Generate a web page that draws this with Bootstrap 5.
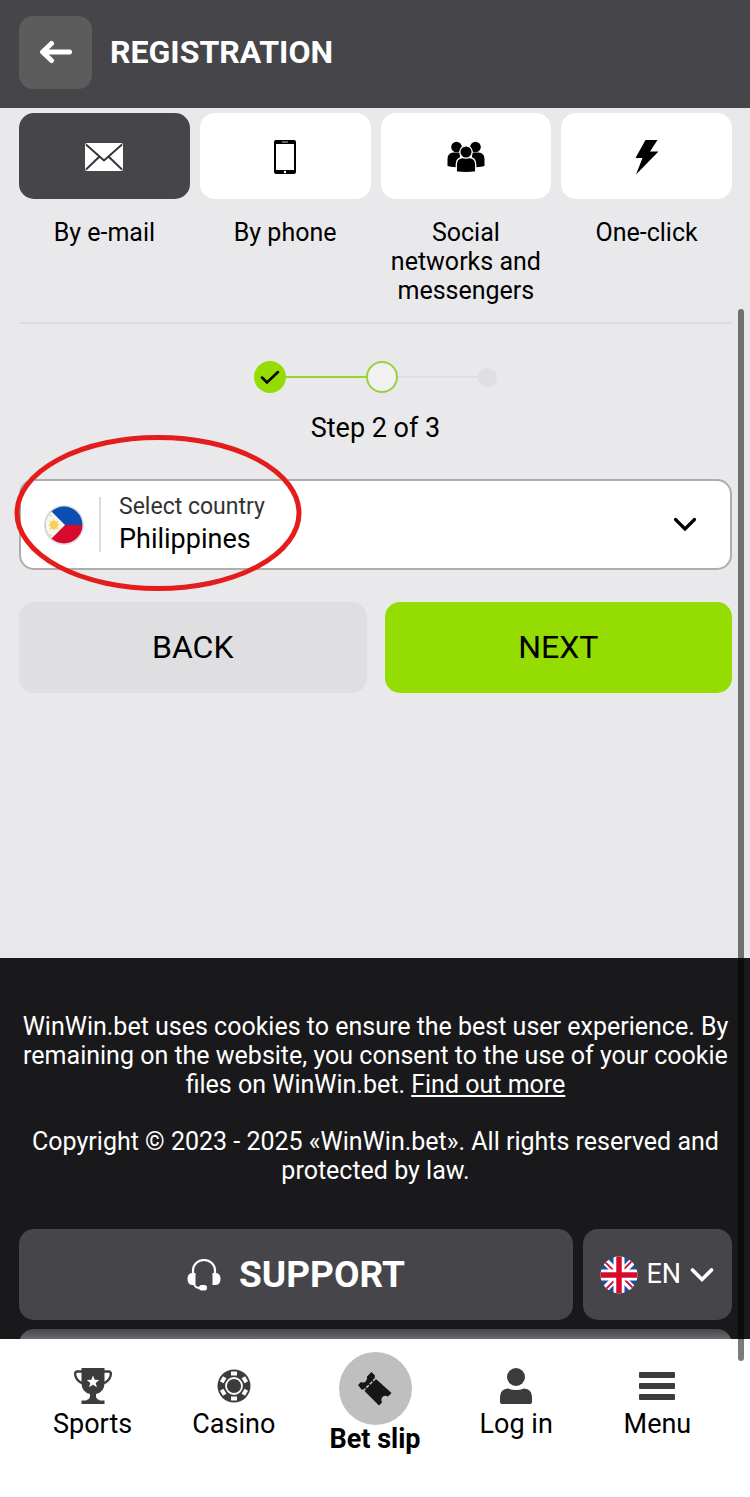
<!DOCTYPE html>
<html lang="en">
<head>
<meta charset="utf-8">
<meta name="viewport" content="width=device-width, initial-scale=1">
<title>Registration</title>
<link href="https://cdn.jsdelivr.net/npm/bootstrap@5.3.0/dist/css/bootstrap.min.css" rel="stylesheet">
<style>
  body { font-family: Roboto, "Liberation Sans", sans-serif; color: #000; background: #e9e9eb; line-height: 29px; }
  svg { display: block; flex: none; }
  .gutter { padding-left: 19px; padding-right: 18px; }
  .top-bar { height: 108px; background: #464549; gap: 18px; }
  .top-bar h1 { font-size: 32px; line-height: 40px; }
  .back-btn { width: 73px; height: 73px; border-radius: 14px; background: #5c5c5d; }
  .scroll-area { min-height: 0; }
  .methods { gap: 10px; padding-top: 5px; }
  .method { font-size: 25px; gap: 19px; color: #000; }
  .method-tile { height: 86px; border-radius: 15px; background: #fff; padding-top: 2px; }
  .method.active .method-tile { background: #464549; color: #fff; }
  .rule { border-top: 2px solid #dcdcde; margin: 17px 0 37px; }
  .step-done { width: 32px; height: 32px; background: #95dc03; }
  .step-now { width: 32px; height: 32px; border: 2px solid #9ad03f; background: #f1f1f2; }
  .step-next { width: 19px; height: 19px; background: #dfdfe1; }
  .step-line { width: 80px; height: 2px; background: #dfdfe1; }
  .step-line.passed { background: #95d52c; }
  .step-text { font-size: 27px; line-height: 34px; margin: 18px 0 34px; }
  .country { height: 91px; border: 2px solid #adadae; border-radius: 15px; background: #fff; padding: 0 33px 0 23px; }
  .country-split { width: 2px; height: 55px; background: #dcdcde; margin: 0 18px 0 15px; }
  .country-text { padding-bottom: 2px; }
  .country label { font-size: 23px; line-height: 30px; color: #333; }
  .plain-select { appearance: none; border: 0; background: transparent; padding: 0; outline-offset: 4px; }
  .country select { font-size: 27px; line-height: 34px; height: 34px; color: #000; }
  .marker { left: -8px; top: -48px; pointer-events: none; }
  .actions { gap: 18px; margin-top: 32px; }
  .big-btn { height: 91px; border-radius: 15px; font-size: 32px; color: #000; padding: 0 0 2px; }
  .big-btn.next { background: #95dc03; }
  .big-btn.prev { background: #dfdfe1; }
  .site-footer { background: #19191b; color: #fff; font-size: 25px; margin-top: 265px; padding-top: 54px; }
  .site-footer p { margin-bottom: 28px; }
  .footer-row { gap: 10px; margin-top: 44px; }
  .dark-tile { background: #464549; color: #fff; height: 91px; border-radius: 15px; }
  .support { font-size: 37px; gap: 18px; }
  .lang { width: 149px; gap: 9px; padding-right: 2px; }
  .lang select { font-size: 27px; width: 34px; color: #fff; }
  .lang option { color: #000; }
  .peek { margin-top: 9px; background: linear-gradient(#464549, #6a696c 10px); }
  .bottom-bar { height: 158px; background: #fff; padding: 13px 22px 0; }
  .bottom-bar a { flex: 1 1 0; color: #000; font-size: 27px; }
  .tab-icon { height: 58px; padding-top: 15px; color: #3c3c3d; }
  .slip-icon { width: 73px; height: 73px; background: #bfbfbf; color: #161616; }
  .bottom-bar svg { margin: 0 auto; }
  .scroll-thumb { right: 6px; top: 309px; bottom: 136px; width: 6px; border-radius: 3px; background: rgba(0,0,0,.52); pointer-events: none; }
</style>
</head>
<body>
<div class="vh-100 d-flex flex-column position-relative overflow-hidden">
  <header class="top-bar gutter d-flex align-items-center flex-shrink-0 text-white pb-1">
    <button class="btn back-btn p-0 border-0 d-flex align-items-center justify-content-center" type="button" aria-label="Back">
      <svg width="34" height="26" viewBox="0 0 34 26" fill="none" stroke="#fff" stroke-width="5" stroke-linecap="round" stroke-linejoin="round"><path d="M12.500 4.500 3.500 13l9 8.500M4 13h26.500"/></svg>
    </button>
    <h1 class="fw-bold mb-0">REGISTRATION</h1>
  </header>

  <div class="scroll-area flex-fill overflow-hidden">
    <main class="gutter">
      <nav class="methods d-flex" aria-label="Registration method">
        <a href="#" class="method active col d-flex flex-column text-center text-decoration-none">
          <span class="method-tile d-flex align-items-center justify-content-center">
            <svg width="38" height="28" viewBox="0 0 38 28"><rect width="38" height="28" rx="2" fill="#fff"/><path d="M1 1.500 19 17.500 37 1.500M1 26.500 14.500 13.500M37 26.500 23.500 13.500" fill="none" stroke="#333336" stroke-width="1.900"/></svg>
          </span>By e-mail</a>
        <a href="#" class="method col d-flex flex-column text-center text-decoration-none">
          <span class="method-tile d-flex align-items-center justify-content-center">
            <svg width="22" height="34" viewBox="0 0 22 34"><path fill-rule="evenodd" d="M2 0h18a2 2 0 0 1 2 2v30a2 2 0 0 1-2 2H2a2 2 0 0 1-2-2V2a2 2 0 0 1 2-2ZM2 4v26h18V4Z"/><path d="M8 2h6" stroke="#bbb"/><circle cx="11" cy="32" r="1.200" fill="#fff"/></svg>
          </span>By phone</a>
        <a href="#" class="method col d-flex flex-column text-center text-decoration-none">
          <span class="method-tile d-flex align-items-center justify-content-center">
            <svg width="38" height="32" viewBox="0 0 38 32"><circle cx="9.500" cy="6" r="5.300"/><circle cx="28.500" cy="6" r="5.300"/><path d="M.5 25v-7q0-6 6-6.500h6.500v14.500Q4 26.500.5 25ZM37.500 25v-7q0-6-6-6.500H25v14.500q9 .5 12.500-1Z"/><g stroke="#fff" stroke-width="1.300"><path d="M9.300 31v-7.500q0-6.500 6.200-7h7q6.200.5 6.200 7V31q-9.700 1.500-19.400 0Z"/><circle cx="19" cy="11" r="6.200"/></g></svg>
          </span>Social networks and messengers</a>
        <a href="#" class="method col d-flex flex-column text-center text-decoration-none">
          <span class="method-tile d-flex align-items-center justify-content-center">
            <svg width="24" height="36" viewBox="0 0 24 36"><path d="M10.500 1h12l-7.500 11.500h8.500L1 35.500 7.500 19H.5Z"/></svg>
          </span>One-click</a>
      </nav>
      <div class="rule"></div>

      <div class="d-flex align-items-center justify-content-center">
        <span class="step-done rounded-circle d-flex align-items-center justify-content-center"><svg width="20" height="14" viewBox="0 0 20 14" fill="none" stroke="#000" stroke-width="2.500" stroke-linecap="round"><path d="m2 7.500 5 5L18 2"/></svg></span>
        <span class="step-line passed"></span>
        <span class="step-now rounded-circle"></span>
        <span class="step-line"></span>
        <span class="step-next rounded-circle"></span>
      </div>
      <p class="step-text text-center">Step 2 of 3</p>

      <div class="country d-flex align-items-center position-relative">
        <svg width="40" height="40" viewBox="0 0 40 40"><defs><clipPath id="ph"><circle cx="20" cy="20" r="18.500"/></clipPath></defs><circle cx="20" cy="20" r="20" fill="#dfe1e6"/><g clip-path="url(#ph)"><path fill="#0b4db3" d="M0 0h40v20H0Z"/><path fill="#d80a2b" d="M0 20h40v20H0Z"/><path fill="#f7f7f7" d="M0-1 21 20 0 41Z"/></g><circle cx="10" cy="20" r="4.200" fill="#f8d34f"/><path d="M10 14.500v11M4.500 20h11M6 16l8 8M14 16l-8 8" stroke="#f8d34f" stroke-width="1.200"/><circle cx="6.500" cy="10.500" r="1" fill="#f8d34f"/><circle cx="6.500" cy="30" r="1" fill="#f8d34f"/></svg>
        <span class="country-split"></span>
        <div class="country-text flex-fill d-flex flex-column">
          <label for="country">Select country</label>
          <select id="country" class="plain-select"><option>Philippines</option></select>
        </div>
        <svg width="24" height="16" viewBox="0 0 24 16" fill="none" stroke="#000" stroke-width="3.200" stroke-linecap="round"><path d="m2.500 2.500 9.500 9.500 9.500-9.500"/></svg>
        <svg class="marker position-absolute" width="290" height="160" viewBox="0 0 290 160"><ellipse cx="145" cy="80" rx="141" ry="75.500" fill="none" stroke="#e51c1c" stroke-width="5"/></svg>
      </div>

      <div class="actions d-flex">
        <button type="button" class="btn big-btn prev col border-0">BACK</button>
        <button type="button" class="btn big-btn next col border-0">NEXT</button>
      </div>
    </main>

    <footer class="site-footer gutter text-center">
      <p>WinWin.bet uses cookies to ensure the best user experience. By remaining on the website, you consent to the use of your cookie files on WinWin.bet. <a href="#" class="text-white">Find out more</a></p>
      <p>Copyright © 2023 - 2025 «WinWin.bet». All rights reserved and protected by law.</p>
      <div class="footer-row d-flex">
        <button type="button" class="btn dark-tile support fw-bold flex-fill border-0 d-flex align-items-center justify-content-center">
          <svg width="34" height="32" viewBox="0 0 34 32"><path d="M6 14v-2.500a11 10.500 0 0 1 22 0V14" fill="none" stroke="#fff" stroke-width="2.200"/><path d="M8.500 14v12H5q-4.500-.5-4.500-6T5 14ZM25.500 14v12H29q4.500-.5 4.500-6T29 14Z" fill="#fff"/><path d="M7 25q1 4 6 4" fill="none" stroke="#fff" stroke-width="1.800"/><rect x="12" y="26" width="8" height="5.500" rx="2.500" fill="#fff"/></svg>
          SUPPORT
        </button>
        <div class="dark-tile lang d-flex align-items-center justify-content-center">
          <svg width="38" height="38" viewBox="0 0 38 38"><defs><clipPath id="uk"><circle cx="19" cy="19" r="18.500"/></clipPath></defs><g clip-path="url(#uk)"><path fill="#1e50a0" d="M0 0h38v38H0Z"/><path d="m0 0 38 38M38 0 0 38" stroke="#fff" stroke-width="7"/><path d="m0 1 17 17M37 0 20 17M38 37 21 20M1 38l17-17" stroke="#d80a2b" stroke-width="1.800"/><path d="M19 0v38M0 19h38" stroke="#fff" stroke-width="11"/><path d="M19 0v38M0 19h38" stroke="#d80a2b" stroke-width="5.500"/></g></svg>
          <select class="plain-select" aria-label="Language"><option>EN</option></select>
          <svg width="24" height="16" viewBox="0 0 24 16" fill="none" stroke="#fff" stroke-width="3.600" stroke-linecap="round"><path d="m2.500 3 9.500 9.500L21.500 3"/></svg>
        </div>
      </div>
      <div class="dark-tile peek"></div>
    </footer>
  </div>

  <nav class="bottom-bar d-flex flex-shrink-0 text-center" aria-label="Main">
    <a href="#" class="text-decoration-none"><div class="tab-icon"><svg width="38" height="38" viewBox="0 0 38 38" fill="currentColor"><path d="M7.500 1h23v15q0 9-8.500 11v3q1 3 4 3.500h4.500V37h-23v-3.500H12q3-.5 4-3.500v-3q-8.500-2-8.500-11Z"/><path d="M8 4.500H3q-2.500 0-1.500 4.500 1.500 5.500 7.500 7.500M30 4.500h5q2.500 0 1.500 4.500-1.500 5.500-7.500 7.500" fill="none" stroke="currentColor" stroke-width="2.400"/><path fill="#fff" d="m19 8.500 1.700 4.200 4.500.3-3.500 2.900 1.200 4.400-3.900-2.500-3.900 2.500 1.200-4.400-3.500-2.900 4.500-.3Z"/></svg></div>Sports</a>
    <a href="#" class="text-decoration-none"><div class="tab-icon"><svg width="38" height="38" viewBox="0 0 38 38"><circle cx="19" cy="19" r="16.500" fill="currentColor"/><circle cx="19" cy="19" r="8" fill="none" stroke="#fff" stroke-width="1.800"/><g fill="#fff"><rect id="pip" x="16" y="4.500" width="6" height="4"/><use href="#pip" transform="rotate(60 19 19)"/><use href="#pip" transform="rotate(120 19 19)"/><use href="#pip" transform="rotate(180 19 19)"/><use href="#pip" transform="rotate(240 19 19)"/><use href="#pip" transform="rotate(300 19 19)"/></g></svg></div>Casino</a>
    <a href="#" class="text-decoration-none fw-bold"><div class="slip-icon rounded-circle mx-auto d-flex align-items-center"><svg width="34" height="34" viewBox="0 0 34 34" fill="currentColor"><path d="M0 13 3 10q3.500 1.500 5-1T9 4.500L13.500 0 17 3.500q-1 2.500 1.500 4L33.500 21l-3.500 3.500q-3.500-1.500-5.500.5t-.5 5.500L21 33.500 7 19.500q-1.500-2.500-3.500-2Z"/><path d="M5 19 18 6" stroke="#bfbfbf" stroke-width="1.600" stroke-dasharray="3.400 1.400"/></svg></div>Bet slip</a>
    <a href="#" class="text-decoration-none"><div class="tab-icon"><svg width="38" height="38" viewBox="0 0 38 38" fill="currentColor"><circle cx="19" cy="10" r="9"/><path d="M3 35v-5q0-8 8-8.500 8 3 16 0 8 .5 8 8.500v5q0 2-2 2H5q-2 0-2-2Z"/></svg></div>Log in</a>
    <a href="#" class="text-decoration-none"><div class="tab-icon"><svg width="38" height="38" viewBox="0 0 38 38" fill="currentColor"><rect x="1" y="5" width="36" height="6" rx="1"/><rect x="1" y="16" width="36" height="6" rx="1"/><rect x="1" y="27" width="36" height="6" rx="1"/></svg></div>Menu</a>
  </nav>
  <div class="scroll-thumb position-absolute"></div>
</div>
<script src="https://cdn.jsdelivr.net/npm/bootstrap@5.3.0/dist/js/bootstrap.bundle.min.js"></script>
</body>
</html>
